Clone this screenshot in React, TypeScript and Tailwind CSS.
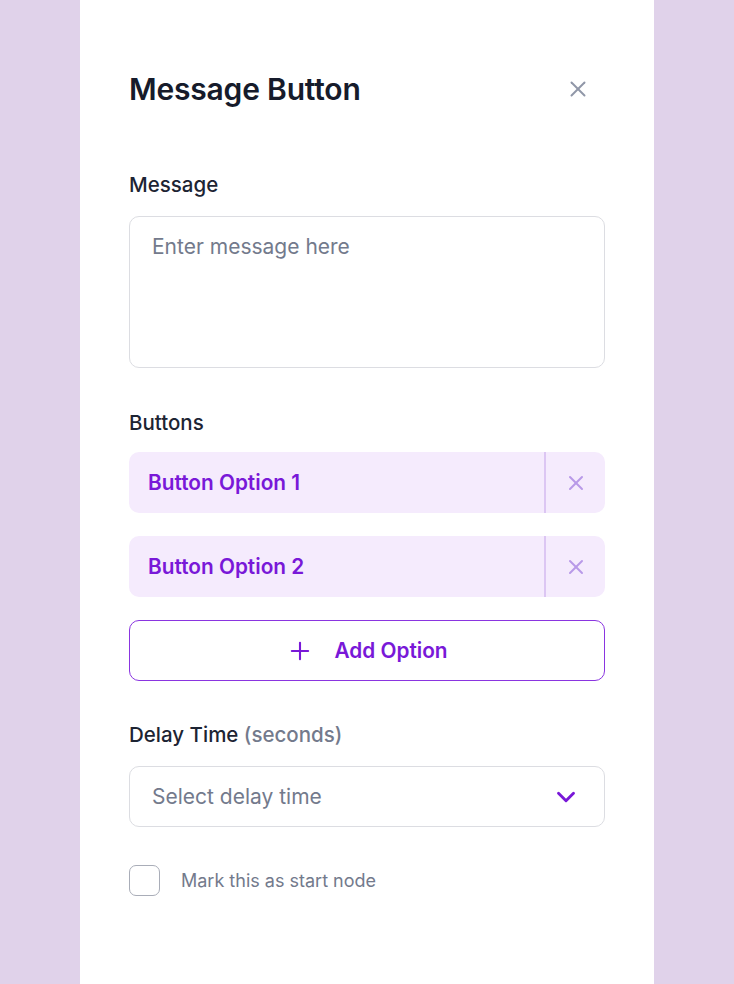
import { Plus, X, ChevronDown } from "lucide-react"

const options = ["Button Option 1", "Button Option 2"]

const App = () => {
  return (
    <div className="min-h-[984px] w-full bg-[#e0d2ea] flex justify-center font-['Inter',sans-serif]">
      <div className="w-[574px] bg-white px-[49px] pt-[70px] pb-[80px]">
        <div className="flex items-center justify-between">
          <h1 className="text-[30px] leading-[38px] font-semibold text-[#161b2b] tracking-[-0.2px]">Message Button</h1>
          <button className="mr-[14px] text-[#9097a8]">
            <X size={26} strokeWidth={1.8} />
          </button>
        </div>

        <div className="mt-[65px]">
          <label className="block text-[20.5px] leading-6 font-medium text-[#1d2433]">Message</label>
          <div className="mt-[19px] h-[152px] rounded-[10px] border border-[#dcdde2] px-[22px] pt-[18px]">
            <p className="text-[21px] leading-6 text-[#737a8c]">Enter message here</p>
          </div>
        </div>

        <div className="mt-[43px]">
          <label className="block text-[20.5px] leading-6 font-medium text-[#1d2433]">Buttons</label>
          <div className="mt-[17px] flex flex-col gap-[23px]">
            {options.map((opt) => (
              <div key={opt} className="flex h-[61px] items-stretch rounded-[10px] bg-[#f5ebfd]">
                <div className="flex flex-1 items-center pl-[19px] text-[20.8px] font-semibold text-[#7918d8]">{opt}</div>
                <div className="w-[2px] bg-[#dcc6f3]" />
                <div className="flex w-[59px] items-center justify-center text-[#b899e8]">
                  <X size={24} strokeWidth={2} />
                </div>
              </div>
            ))}
          </div>
          <button className="mt-[23px] flex h-[61px] w-full items-center justify-center gap-[20px] rounded-[10px] border-[1.5px] border-[#8a35e0] text-[20.8px] font-semibold text-[#7918d8]">
            <Plus size={28} strokeWidth={1.8} />
            Add Option
          </button>
        </div>

        <div className="mt-[42px]">
          <label className="block text-[20.5px] leading-6 font-medium text-[#1d2433]">
            Delay Time <span className="text-[#737a8c]">(seconds)</span>
          </label>
          <div className="mt-[19px] flex h-[61px] items-center justify-between rounded-[10px] border border-[#dcdde2] pl-[22px] pr-[23px]">
            <span className="text-[21px] text-[#737a8c]">Select delay time</span>
            <ChevronDown size={30} strokeWidth={2.3} className="text-[#7918d8]" />
          </div>
        </div>

        <div className="mt-[38px] flex items-center gap-[21px]">
          <div className="h-[31px] w-[31px] rounded-[7px] border-[1.5px] border-[#a9adb8]" />
          <span className="text-[18px] text-[#737a8c]">Mark this as start node</span>
        </div>
      </div>
    </div>
  )
}

export default App
